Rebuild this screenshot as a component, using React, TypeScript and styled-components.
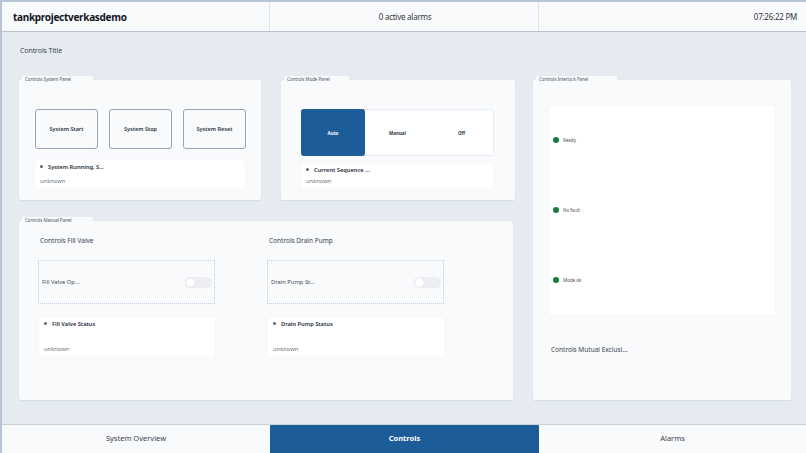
import React from "react";
import styled, { createGlobalStyle } from "styled-components";

const Global = createGlobalStyle`
  html, body { margin: 0; padding: 0; width: 806px; height: 453px; overflow: hidden; }
  body { font-family: "Noto Sans", "Open Sans", sans-serif; background: #e6ebf2; }
  * { box-sizing: border-box; }
`;

const Page = styled.div`
  width: 806px; height: 453px; display: flex; flex-direction: column;
  background: #e6ebf2; border-top: 2px solid #b7c5d6; border-left: 2px solid #b7c5d6;
`;
const Header = styled.header`
  height: 30px; flex: none; display: grid; grid-template-columns: 268px 269px 267px;
  background: #f9fafc; border-bottom: 1px solid #b9c3d0;
`;
const HeaderCell = styled.div<{ $align?: string }>`
  display: flex; align-items: center; justify-content: ${p => p.$align || "center"};
  padding: 0 9px 0 11px; font-size: 8px; letter-spacing: -0.25px; color: #2f3640; border-right: 1px solid #e0e4ea;
  &:last-child { border-right: 0; }
`;
const AppName = styled.span`
  font-size: 10px; font-weight: 700; color: #10161f; letter-spacing: -0.3px;
`;
const Main = styled.main`
  flex: 1; min-height: 0; padding: 13px 0 0 17px;
`;
const PageTitle = styled.div`
  height: 11px; line-height: 11px; margin: 0 0 24px 1px; font-size: 7px; letter-spacing: -0.1px; color: #3d4550;
`;
const Board = styled.div`
  display: grid; grid-template-columns: 496px 258px; column-gap: 18px; align-items: start;
`;
const LeftColumn = styled.div`
  display: flex; flex-direction: column; gap: 21px;
`;
const TopRow = styled.div`
  display: flex; gap: 20px;
`;
const Panel = styled.section<{ $w: number; $h: number }>`
  position: relative; width: ${p => p.$w}px; height: ${p => p.$h}px;
  background: #f8fafc; border-radius: 2px; box-shadow: 0 0 1px #cfd6e0, 0 1px 1px #d8dee7;
`;
const Legend = styled.div<{ $w: number }>`
  position: absolute; left: 3px; top: -4px; width: ${p => p.$w}px; height: 6px;
  background: #f8fafc; border-radius: 1px 1px 0 0; padding-left: 3px;
  font-size: 4.4px; line-height: 6px; color: #4b5360; white-space: nowrap;
`;
const SystemBody = styled.div`
  padding: 29px 15px 0 16px; display: flex; flex-direction: column; gap: 11px;
`;
const ButtonRow = styled.div`
  display: flex; gap: 11px;
`;
const ActionButton = styled.button`
  width: 63px; height: 40px; padding: 0; background: #f8fafc;
  border: 1px solid #97a2bb; border-radius: 3px;
  font: 600 5.5px "Noto Sans", sans-serif; color: #2c333d;
`;
const StatusCard = styled.div<{ $h: number; $gap: number; $w: number; $inset?: number }>`
  width: ${p => p.$w}px; height: ${p => p.$h}px; margin-left: ${p => p.$inset || 0}px;
  background: #fff; border-radius: 2px;
  box-shadow: 0 0 1px #e3e7ed; padding: 2px 5px 0 5px;
  display: flex; flex-direction: column; gap: ${p => p.$gap}px;
`;
const StatusHead = styled.div`
  display: flex; align-items: center; gap: 5px; height: 9px;
  font-size: 5.7px; font-weight: 600; color: #262d37; white-space: nowrap;
  &::before { content: ""; width: 3px; height: 3px; border-radius: 50%; background: #5b6472; }
`;
const StatusValue = styled.div`
  font-size: 5.8px; line-height: 8px; color: #6c7480;
`;
const ModeBody = styled.div`
  padding: 29px 0 0 20px; display: flex; flex-direction: column; gap: 7px;
`;
const Segments = styled.div`
  width: 193px; height: 47px; display: grid; grid-template-columns: 63px 65px 63px;
  background: #fff; border: 1px dotted #ccd6e8; border-radius: 2px;
`;
const Segment = styled.div<{ $active?: boolean }>`
  display: flex; align-items: center; justify-content: center;
  font-size: 4.5px; font-weight: 700; border-radius: 3px;
  margin: ${p => (p.$active ? "-1px 0 -1px -1px" : "0")};
  color: ${p => (p.$active ? "#fff" : "#30363f")};
  background: ${p => (p.$active ? "#1b5c99" : "transparent")};
`;
const ManualBody = styled.div`
  display: flex; padding: 0 0 0 19px; gap: 52px;
`;
const ManualColumn = styled.div`
  width: 177px; display: flex; flex-direction: column; align-items: flex-start;
`;
const SubTitle = styled.div`
  height: 39px; padding: 13px 0 0 2px; font-size: 6.5px; line-height: 13px; color: #3c434e;
`;
const ToggleBox = styled.div`
  width: 177px; height: 44px; border: 1px dotted #bfcbe2; padding: 0 2px 0 3px;
  display: flex; align-items: center; justify-content: space-between;
  font-size: 5.8px; color: #454c57; margin-bottom: 13px;
`;
const Switch = styled.div`
  position: relative; width: 27px; height: 11px; border-radius: 6px; background: #eceef2;
  &::after { content: ""; position: absolute; left: 1px; top: 1px; width: 9px; height: 9px;
    border-radius: 50%; background: #fff; box-shadow: 0 0 1px #b9bec6; }
`;
const InterlockBody = styled.div`
  padding: 26px 16px 0 16px;
`;
const InterlockList = styled.div`
  height: 209px; background: #fff; border-radius: 1px; box-shadow: 0 0 1px #e2e6ec;
  display: flex; flex-direction: column; padding: 29px 0 0 4px; gap: 61px;
`;
const Interlock = styled.div`
  height: 9px; display: flex; align-items: center; gap: 4px; font-size: 4.5px; color: #4b5360;
  &::before { content: ""; width: 6px; height: 6px; border-radius: 50%; background: #177a3f; }
`;
const Mutual = styled.div`
  padding: 29px 0 0 2px; font-size: 6.5px; line-height: 12px; color: #3c434e;
`;
const Tabs = styled.nav`
  height: 29px; flex: none; display: grid; grid-template-columns: 268px 269px 267px;
  background: #f8fafc; border-top: 1px solid #c7cfda;
`;
const Tab = styled.div<{ $active?: boolean }>`
  display: flex; align-items: center; justify-content: center; font-size: 7.5px; padding-bottom: 2px;
  font-weight: ${p => (p.$active ? 700 : 400)};
  color: ${p => (p.$active ? "#fff" : "#3a414c")};
  background: ${p => (p.$active ? "#1b5c99" : "transparent")};
  border-radius: ${p => (p.$active ? "1px 1px 0 0" : "0")};
`;

const Status = ({ title, w, h, gap, inset }: { title: string; w: number; h: number; gap: number; inset?: number }) => (
  <StatusCard $w={w} $h={h} $gap={gap} $inset={inset}>
    <StatusHead>{title}</StatusHead>
    <StatusValue>unknown</StatusValue>
  </StatusCard>
);

const Manual = ({ title, label, status }: { title: string; label: string; status: string }) => (
  <ManualColumn>
    <SubTitle>{title}</SubTitle>
    <ToggleBox>
      {label}
      <Switch />
    </ToggleBox>
    <Status title={status} w={176} h={40} gap={17} inset={1} />
  </ManualColumn>
);

export default function App() {
  return (
    <Page>
      <Global />
      <Header>
        <HeaderCell $align="flex-start"><AppName>tankprojectverkasdemo</AppName></HeaderCell>
        <HeaderCell>0 active alarms</HeaderCell>
        <HeaderCell $align="flex-end">07:26:22 PM</HeaderCell>
      </Header>
      <Main>
        <PageTitle>Controls Title</PageTitle>
        <Board>
          <LeftColumn>
            <TopRow>
              <Panel $w={242} $h={120}>
                <Legend $w={71}>Controls System Panel</Legend>
                <SystemBody>
                  <ButtonRow>
                    <ActionButton>System Start</ActionButton>
                    <ActionButton>System Stop</ActionButton>
                    <ActionButton>System Reset</ActionButton>
                  </ButtonRow>
                  <Status title="System Running, S..." w={210} h={29} gap={6} />
                </SystemBody>
              </Panel>
              <Panel $w={234} $h={120}>
                <Legend $w={65}>Controls Mode Panel</Legend>
                <ModeBody>
                  <Segments>
                    <Segment $active>Auto</Segment>
                    <Segment>Manual</Segment>
                    <Segment>Off</Segment>
                  </Segments>
                  <Status title="Current Sequence ..." w={192} h={26} gap={3} />
                </ModeBody>
              </Panel>
            </TopRow>
            <Panel $w={494} $h={179}>
              <Legend $w={71}>Controls Manual Panel</Legend>
              <ManualBody>
                <Manual title="Controls Fill Valve" label="Fill Valve Op..." status="Fill Valve Status" />
                <Manual title="Controls Drain Pump" label="Drain Pump St..." status="Drain Pump Status" />
              </ManualBody>
            </Panel>
          </LeftColumn>
          <Panel $w={258} $h={320}>
            <Legend $w={81}>Controls Interlock Panel</Legend>
            <InterlockBody>
              <InterlockList>
                <Interlock>Ready</Interlock>
                <Interlock>No fault</Interlock>
                <Interlock>Mode ok</Interlock>
              </InterlockList>
              <Mutual>Controls Mutual Exclusi...</Mutual>
            </InterlockBody>
          </Panel>
        </Board>
      </Main>
      <Tabs>
        <Tab>System Overview</Tab>
        <Tab $active>Controls</Tab>
        <Tab>Alarms</Tab>
      </Tabs>
    </Page>
  );
}
